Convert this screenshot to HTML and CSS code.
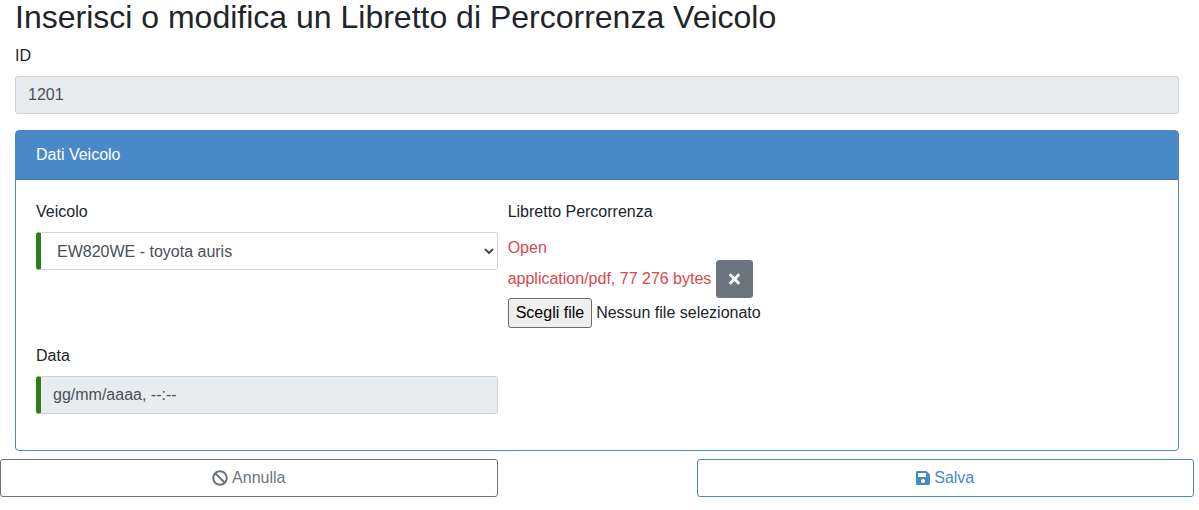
FILE: index.html
```html
<!DOCTYPE html>
<html lang="it">
<head>
  <meta charset="utf-8">
  <meta name="viewport" content="width=device-width, initial-scale=1">
  <title>Libretto di Percorrenza Veicolo</title>
  <link rel="stylesheet" href="styles.css">
</head>
<body>
  <form class="page">
    <div class="content">
      <h2 class="title">Inserisci o modifica un Libretto di Percorrenza Veicolo</h2>
      <div class="form-group">
        <label class="label" for="id">ID</label>
        <input class="control control-muted" id="id" type="text" value="1201" readonly>
      </div>
      <section class="card">
        <header class="card-header">Dati Veicolo</header>
        <div class="card-body">
          <div class="form-group col-left">
            <label class="label" for="veicolo">Veicolo</label>
            <select class="control control-valid" id="veicolo">
              <option>EW820WE - toyota auris</option>
            </select>
          </div>
          <div class="form-group col-right">
            <label class="label" for="libretto">Libretto Percorrenza</label>
            <a class="file-open" href="#">Open</a>
            <div class="file-row">
              <span class="file-info">application/pdf, 77 276 bytes</span>
              <button class="btn btn-remove" type="button" aria-label="Rimuovi">
                <svg class="icon-times" viewBox="0 0 352 512" aria-hidden="true"><path fill="currentColor" d="M242.72 256l100.07-100.07c12.28-12.28 12.28-32.19 0-44.48l-22.24-22.24c-12.28-12.28-32.19-12.28-44.48 0L176 189.28 75.93 89.21c-12.28-12.28-32.19-12.28-44.48 0L9.21 111.45c-12.28 12.28-12.28 32.19 0 44.48L109.28 256 9.21 356.07c-12.28 12.28-12.28 32.19 0 44.48l22.24 22.24c12.28 12.28 32.2 12.28 44.48 0L176 322.72l100.07 100.07c12.28 12.28 32.2 12.28 44.48 0l22.24-22.24c12.28-12.28 12.28-32.19 0-44.48L242.72 256z"/></svg>
              </button>
            </div>
            <div class="file-picker">
              <input id="libretto" type="file" hidden>
              <button class="file-button" type="button" onclick="document.getElementById('libretto').click()">Scegli file</button>
              <span>Nessun file selezionato</span>
            </div>
          </div>
          <div class="form-group col-left">
            <label class="label" for="data">Data</label>
            <input class="control control-muted control-valid" id="data" type="text" value="gg/mm/aaaa, --:--" readonly>
          </div>
        </div>
      </section>
    </div>
    <div class="actions">
      <button class="btn btn-cancel" type="button">
        <svg class="icon" viewBox="0 0 512 512" aria-hidden="true"><path fill="currentColor" d="M256 8C119.034 8 8 119.033 8 256s111.034 248 248 248 248-111.034 248-248S392.967 8 256 8zm130.108 117.892c65.448 65.448 70 165.481 20.677 235.637L150.47 105.216c70.204-49.356 170.226-44.735 235.638 20.676zM125.892 386.108c-65.448-65.448-70-165.481-20.677-235.637L361.53 406.784c-70.203 49.356-170.226 44.736-235.638-20.676z"/></svg>
        <span>Annulla</span>
      </button>
      <button class="btn btn-save" type="submit">
        <svg class="icon-save" viewBox="0 0 448 512" aria-hidden="true"><path fill="currentColor" d="M433.941 129.941l-83.882-83.882A48 48 0 0 0 316.118 32H48C21.49 32 0 53.49 0 80v352c0 26.51 21.49 48 48 48h352c26.51 0 48-21.49 48-48V163.882a48 48 0 0 0-14.059-33.941zM224 416c-35.346 0-64-28.654-64-64 0-35.346 28.654-64 64-64s64 28.654 64 64c0 35.346-28.654 64-64 64zm96-304.52V212c0 6.627-5.373 12-12 12H76c-6.627 0-12-5.373-12-12V108c0-6.627 5.373-12 12-12h228.52c3.183 0 6.235 1.264 8.485 3.515l3.48 3.48A11.996 11.996 0 0 1 320 111.48z"/></svg>
        <span>Salva</span>
      </button>
    </div>
  </form>
</body>
</html>
```
FILE: styles.css
```css
*,
*::before,
*::after {
  box-sizing: border-box;
}

body {
  margin: 0;
  background: #fff;
  color: #212529;
  font-family: "Liberation Sans", Arial, sans-serif;
  font-size: 16px;
  line-height: 24px;
}

button,
input,
select {
  margin: 0;
  font: inherit;
}

.page {
  margin-right: 5px;
}

.content {
  padding: 0 15px;
}

.title {
  margin: 0 0 10px;
  font-size: 32px;
  font-weight: 400;
  line-height: 34px;
}

.form-group {
  margin-bottom: 16px;
}

.label {
  display: block;
  margin-bottom: 8px;
}

.control {
  display: block;
  width: 100%;
  height: 38px;
  padding: 6px 12px;
  border: 1px solid #ced4da;
  border-radius: 3px;
  background-color: #fff;
  color: #495057;
}

select.control {
  padding-right: 0;
}

.control-muted {
  background-color: #e9ecef;
}

.control-valid {
  border-left: 5px solid #2d7d1c;
}

.card {
  border: 1px solid #4a89c8;
  border-radius: 4px;
}

.card-header {
  padding: 12px 20px;
  border-bottom: 1px solid #4178af;
  background: #4a89c8;
  color: #fff;
}

.card-body {
  display: grid;
  grid-template-columns: repeat(12, 1fr);
  column-gap: 10px;
  padding: 20px;
}

.col-left {
  grid-column: 1 / span 5;
}

.col-right {
  grid-column: 6 / span 5;
}

.file-open,
.file-info {
  color: #d9484f;
}

.file-open {
  display: block;
  padding-top: 4px;
  text-decoration: none;
}

.file-row,
.file-picker {
  display: flex;
  align-items: center;
  gap: 4px;
}

.file-row {
  gap: 5px;
}

.file-button {
  height: 30px;
  padding: 1px 7px;
  border: 1px solid #6b6b6b;
  border-radius: 3px;
  background: #efefef;
  color: #000;
}

.btn {
  display: flex;
  align-items: center;
  justify-content: center;
  gap: 4px;
  height: 38px;
  padding: 6px 12px;
  border: 1px solid currentColor;
  border-radius: 3px;
  background: #fff;
}

.btn-remove {
  border-color: #6c757d;
  background: #6c757d;
  color: #fff;
}

.btn-cancel {
  grid-column: 1 / span 5;
  color: #6c757d;
}

.btn-save {
  grid-column: 8 / span 5;
  color: #4a89c8;
}

.actions {
  display: grid;
  grid-template-columns: repeat(12, 1fr);
  padding-top: 8px;
}

.icon {
  width: 16px;
  height: 16px;
}

.icon-save {
  width: 14px;
  height: 16px;
}

.icon-times {
  width: 11px;
  height: 16px;
}
```
